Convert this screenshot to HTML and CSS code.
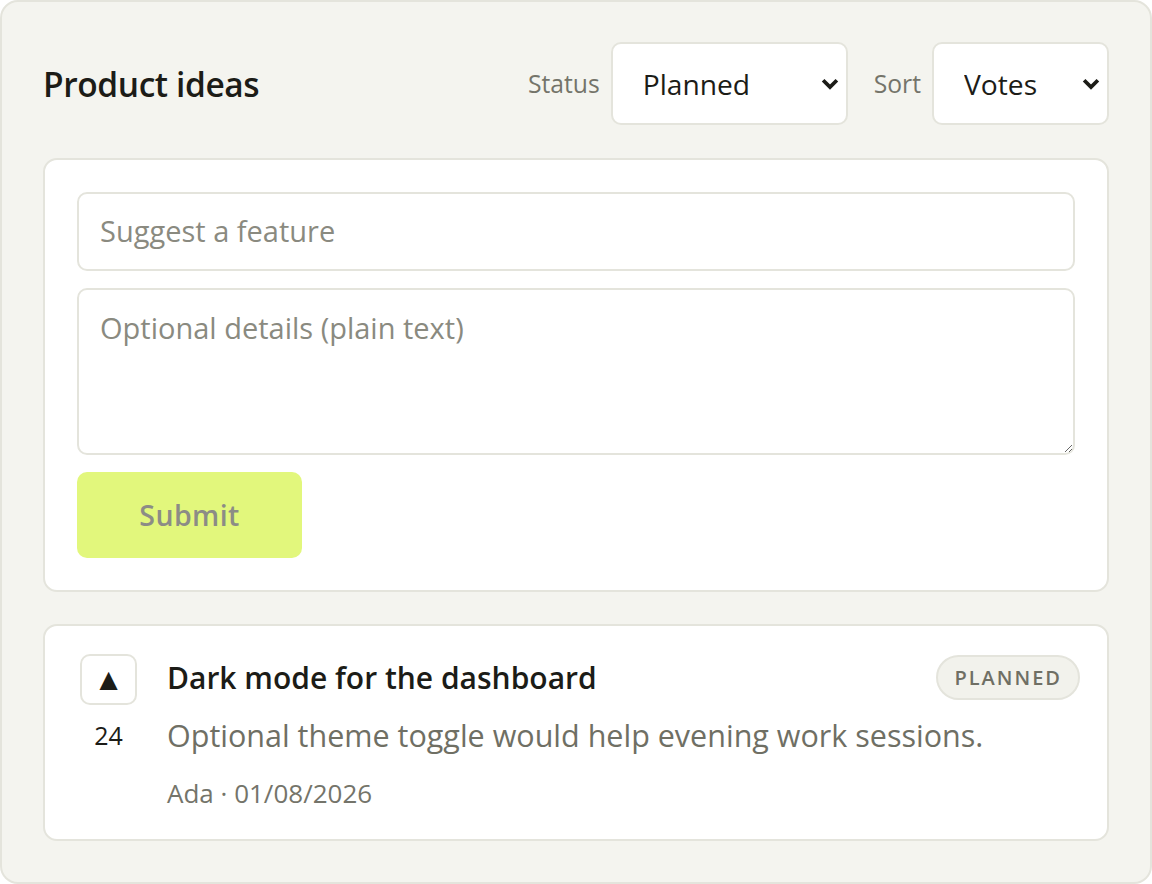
FILE: index.html
```html
<!DOCTYPE html>
<html lang="en">
<head>
  <meta charset="UTF-8" />
  <title>Product ideas</title>
  <meta name="viewport" content="width=device-width, initial-scale=1.0" />
  <link rel="stylesheet" href="styles.css">
</head>
<body>
  <div class="board">
    <div class="board-head">
      <h1>Product ideas</h1>
      <div class="filters">
        <label class="filter">
          <span>Status</span>
          <span class="select-wrap status">
            <select id="status">
              <option>Planned</option>
              <option>Open</option>
              <option>Done</option>
            </select>
            <svg class="chev" viewBox="0 0 16 16"><path d="M2.5 5l5.5 5.5 5.5-5.5" /></svg>
          </span>
        </label>
        <label class="filter">
          <span>Sort</span>
          <span class="select-wrap sort">
            <select id="sort">
              <option>Votes</option>
              <option>Newest</option>
            </select>
            <svg class="chev" viewBox="0 0 16 16"><path d="M2.5 5l5.5 5.5 5.5-5.5" /></svg>
          </span>
        </label>
      </div>
    </div>

    <form class="card suggest">
      <input type="text" placeholder="Suggest a feature" />
      <textarea placeholder="Optional details (plain text)"></textarea>
      <button type="submit" class="submit" disabled>Submit</button>
    </form>

    <div class="card idea">
      <div class="vote">
        <button class="vote-btn">▲</button>
        <span class="count">24</span>
      </div>
      <div class="idea-body">
        <div class="idea-top">
          <h3>Dark mode for the dashboard</h3>
          <span class="badge">PLANNED</span>
        </div>
        <p class="desc">Optional theme toggle would help evening work sessions.</p>
        <p class="meta">Ada · 01/08/2026</p>
      </div>
    </div>
  </div>
</body>
</html>
```

FILE: styles.css
```css
* {
  box-sizing: border-box;
}
body {
  font-family: "Open Sans", "Noto Sans", sans-serif;
  background-color: #ffffff;
  margin: 0;
  color: #1c1c17;
}
.board {
  background: #f4f4ef;
  border: 2px solid #e4e4dc;
  border-radius: 18px;
  height: 884px;
  padding: 39px 41px;
}
.board-head {
  display: flex;
  align-items: center;
  justify-content: space-between;
  height: 85px;
}
h1 {
  margin: 0;
  font-size: 33.5px;
  font-weight: 600;
  letter-spacing: -0.4px;
}
.filters {
  display: flex;
  gap: 26px;
}
.filter {
  display: flex;
  align-items: center;
  gap: 11px;
  font-size: 24.7px;
  color: #74746a;
}
.select-wrap {
  position: relative;
  display: block;
}
.select-wrap select {
  appearance: none;
  -webkit-appearance: none;
  font-family: inherit;
  font-size: 28.2px;
  color: #1c1c17;
  background: #fff;
  border: 2px solid #e4e4dc;
  border-radius: 10px;
  height: 83px;
  padding: 0 30px;
  width: 100%;
  outline: none;
}
.status {
  width: 237px;
}
.sort {
  width: 177px;
}
.chev {
  position: absolute;
  right: 8px;
  top: 32px;
  width: 20px;
  height: 20px;
  fill: none;
  stroke: #1c1c17;
  stroke-width: 3;
  pointer-events: none;
}
.card {
  background: #fff;
  border: 2px solid #e4e4dc;
  border-radius: 14px;
}
.suggest {
  margin-top: 32px;
  padding: 32px 32px;
  display: flex;
  flex-direction: column;
  gap: 17px;
}
.suggest input,
.suggest textarea {
  font-family: inherit;
  font-size: 29px;
  color: #1c1c17;
  border: 2px solid #e4e4dc;
  border-radius: 10px;
  padding: 0 21px;
  outline: none;
}
.suggest input {
  height: 79px;
  padding-bottom: 3px;
}
.suggest textarea {
  height: 167px;
  padding-top: 18px;
  resize: vertical;
}
::placeholder {
  color: #8a8a80;
}
.submit {
  width: 225px;
  height: 86px;
  border: none;
  border-radius: 10px;
  background: #e2f77c;
  color: #8c8c86;
  font-family: inherit;
  font-size: 28.5px;
  font-weight: 600;
  letter-spacing: 0.4px;
}
.idea {
  margin-top: 32px;
  padding: 28px 27px 28px 35px;
  display: flex;
  gap: 30px;
  height: 217px;
}
.vote {
  display: flex;
  flex-direction: column;
  align-items: center;
  gap: 12px;
}
.vote-btn {
  width: 57px;
  height: 51px;
  background: #fff;
  border: 2px solid #e4e4dc;
  border-radius: 10px;
  font-size: 31px;
  line-height: 1;
  color: #1c1c17;
  padding: 0;
}
.count {
  font-size: 25px;
  line-height: 36px;
}
.idea-body {
  flex: 1;
}
.idea-top {
  display: flex;
  align-items: center;
  justify-content: space-between;
  height: 46px;
}
h3 {
  margin: 2px 0 0;
  font-size: 30px;
  line-height: 40px;
  font-weight: 600;
}
.badge {
  font-size: 20px;
  font-weight: 600;
  letter-spacing: 2px;
  color: #6f6f64;
  background: #f2f2ec;
  border: 2px solid #e4e4dc;
  border-radius: 24px;
  padding: 7px 16px;
}
.desc {
  margin: 14px 0 0;
  font-size: 30.5px;
  line-height: 42px;
  color: #6f6f64;
}
.meta {
  margin: 19px 0 0;
  font-size: 26px;
  line-height: 36px;
  color: #74746a;
}
```
